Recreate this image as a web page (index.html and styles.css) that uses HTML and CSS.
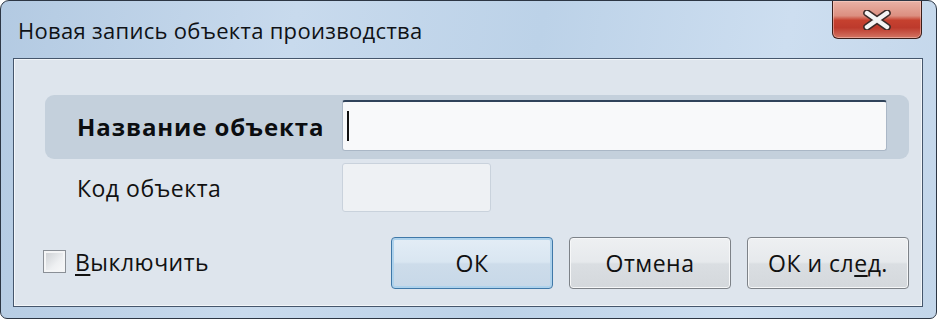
FILE: index.html
```html
<!DOCTYPE html>
<html lang="ru">
<head>
<meta charset="utf-8">
<title>Новая запись объекта производства</title>
<link rel="stylesheet" href="styles.css">
</head>
<body>
<div class="window">
  <div class="titlebar">
    <div class="title">Новая запись объекта производства</div>
    <div class="close">
      <svg width="30" height="20" viewBox="0 0 30 20">
        <path d="M5 3 L25 17 M25 3 L5 17" stroke="#3a2a28" stroke-width="7.5" stroke-linecap="round" fill="none"/>
        <path d="M5 3 L25 17 M25 3 L5 17" stroke="#f4f4f4" stroke-width="4.5" stroke-linecap="round" fill="none"/>
      </svg>
    </div>
  </div>
  <div class="client">
    <div class="row row-main">
      <div class="label label-bold">Название объекта</div>
      <div class="field field-name"><span class="caret"></span></div>
    </div>
    <div class="row row-code">
      <div class="label">Код объекта</div>
      <div class="field field-code"></div>
    </div>
    <div class="footer">
      <label class="check">
        <span class="box"></span>
        <span class="check-text"><u>В</u>ыключить</span>
      </label>
      <div class="buttons">
        <div class="btn btn-default">ОК</div>
        <div class="btn">Отмена</div>
        <div class="btn">ОК и сл<u>е</u>д.</div>
      </div>
    </div>
  </div>
</div>
</body>
</html>
```

FILE: styles.css
```css
html, body {
  margin: 0;
  padding: 0;
  background: #ffffff;
}

body {
  width: 938px;
  height: 320px;
  overflow: hidden;
  font-family: "Open Sans", "Noto Sans", sans-serif;
  color: #111;
}

.window {
  box-sizing: border-box;
  width: 937px;
  height: 319px;
  border: 1px solid #2c3644;
  border-radius: 9px 9px 7px 7px;
  background: linear-gradient(100deg, #b3cae2 0%, #c8daed 30%, #bcd2e8 55%, #cddef0 80%, #c3d6ea 100%);
  padding: 0 13px 11px 12px;
  display: flex;
  flex-direction: column;
}

.titlebar {
  height: 57px;
  flex: none;
  display: flex;
  justify-content: space-between;
  align-items: flex-start;
}

.title {
  padding: 14px 0 0 5px;
  font-size: 22px;
  letter-spacing: 0.3px;
  line-height: 30px;
  color: #0f1216;
}

.close {
  box-sizing: border-box;
  width: 90px;
  height: 38px;
  margin-right: 1px;
  border: 1px solid #3a1e1a;
  border-top: none;
  border-radius: 0 0 6px 6px;
  background: linear-gradient(180deg, #e9b2a6 0%, #dc8f80 40%, #c6412f 52%, #bd3a2c 72%, #d37564 100%);
  box-shadow: inset 0 0 0 1px rgba(255, 220, 210, 0.45);
  display: flex;
  align-items: center;
  justify-content: center;
}

.client {
  flex: 1;
  border: 1px solid #45566c;
  box-shadow: inset 0 0 0 1px #f3f6f9;
  background: #dee5ed;
  display: flex;
  flex-direction: column;
}

.row {
  display: flex;
  align-items: center;
  margin-left: 31px;
  margin-right: 13px;
  padding-left: 32px;
}

.row-main {
  margin-top: 36px;
  height: 64px;
  box-sizing: border-box;
  align-items: flex-start;
  border-radius: 9px;
  background: #c4d0dc;
}

.label {
  width: 265px;
  flex: none;
  font-size: 23px;
  letter-spacing: 0.5px;
  line-height: 30px;
}

.row-main .label {
  margin-top: 17px;
}

.label-bold {
  font-size: 24px;
  font-weight: 700;
  letter-spacing: 0.9px;
  color: #0b0d10;
}

.field {
  box-sizing: border-box;
  border-radius: 3px;
}

.field-name {
  width: 545px;
  height: 51px;
  margin-top: 5px;
  background: #f8f9fa;
  border: 1px solid #aab7c6;
  border-top: 2px solid #30435a;
  display: flex;
  align-items: center;
  padding-left: 4px;
}

.caret {
  width: 2px;
  height: 30px;
  background: #111;
}

.row-code {
  margin-top: 4px;
  height: 49px;
}

.field-code {
  width: 149px;
  height: 49px;
  background: #eef1f4;
  border: 1px solid #c9d2dc;
}

.footer {
  display: flex;
  align-items: center;
  margin-top: 25px;
  padding-left: 29px;
  margin-right: 13px;
}

.check {
  display: flex;
  align-items: center;
  gap: 9px;
  margin-top: -3px;
  font-size: 23px;
  letter-spacing: 0.5px;
  line-height: 30px;
}

.box {
  box-sizing: border-box;
  width: 23px;
  height: 23px;
  border: 1px solid #8a8f96;
  background: linear-gradient(135deg, #c9ccd0 0%, #eef0f2 60%, #f8f9fa 100%);
  box-shadow: inset 0 0 0 2px #f4f5f6;
}

.check-text u {
  text-decoration-thickness: 2px;
  text-underline-offset: 3px;
}

.buttons {
  margin-left: auto;
  display: flex;
  gap: 16px;
}

.btn {
  box-sizing: border-box;
  width: 162px;
  height: 52px;
  border: 1px solid #7d8288;
  border-radius: 4px;
  background: linear-gradient(180deg, #eef0f2 0%, #e6e9ec 48%, #dadee2 52%, #d4d8dc 100%);
  box-shadow: inset 0 0 0 1px #f6f7f8;
  display: flex;
  align-items: center;
  justify-content: center;
  font-size: 23px;
  letter-spacing: 0.5px;
  line-height: 30px;
  color: #111;
}

.btn u {
  text-decoration-thickness: 2px;
  text-underline-offset: 3px;
}

.btn-default {
  border-color: #3f78a8;
  background: linear-gradient(180deg, #e3edf6 0%, #d9e6f1 48%, #cddcea 52%, #c7d8e8 100%);
  box-shadow: inset 0 0 0 2px #aed2ec;
}
```
